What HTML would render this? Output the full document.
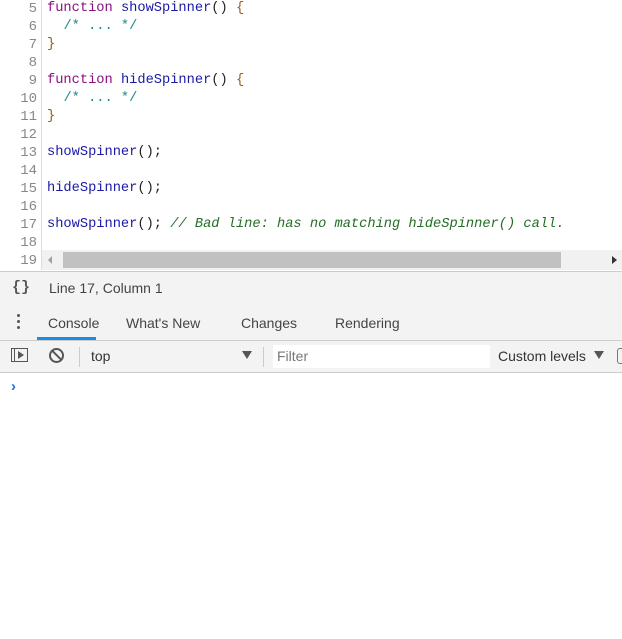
<!DOCTYPE html>
<html><head><style>
body{margin:0;width:622px;height:639px;overflow:hidden;background:#fff;font-family:"Liberation Sans",sans-serif;position:relative}
.code{position:absolute;left:0;top:0;width:622px;height:250px;overflow:hidden}
.ln{position:absolute;left:0;width:37px;text-align:right;color:#888;font:14px/18px "Liberation Mono",monospace}
.gut{position:absolute;left:41px;top:0;width:1px;height:270px;background:#ddd}
.tx{position:absolute;left:47px;font:13.7px/18px "Liberation Mono",monospace;white-space:pre;color:#222}
.k{color:#881280}.f{color:#1a1aa6}.c{color:#236e25}.b{color:#a05a00}.cm{color:#236e25;font-style:italic}
</style></head><body>
<div class="code">
<div class="ln" style="top:0">5<br>6<br>7<br>8<br>9<br>10<br>11<br>12<br>13<br>14<br>15<br>16<br>17<br>18<br>19</div>
<div class="tx" style="top:0"><span class="k">function</span> <span class="f">showSpinner</span>() <span class="b">{</span>
  <span style="color:#1a8a8a">/* ... */</span>
<span class="b">}</span>

<span class="k">function</span> <span class="f">hideSpinner</span>() <span class="b">{</span>
  <span style="color:#1a8a8a">/* ... */</span>
<span class="b">}</span>

<span class="f">showSpinner</span>();

<span class="f">hideSpinner</span>();

<span class="f">showSpinner</span>(); <span class="cm">// Bad line: has no matching hideSpinner() call.</span>
</div>
</div>
<div class="gut"></div>
<div class="ln" style="top:252px;background:#fff">19</div>
<div style="position:absolute;left:42px;top:250px;width:580px;height:20px;background:#f1f1f1"></div>
<div style="position:absolute;left:63px;top:252px;width:498px;height:16px;background:#c1c1c1"></div>
<div style="position:absolute;left:48px;top:256px;width:0;height:0;border-top:4px solid transparent;border-bottom:4px solid transparent;border-right:4px solid #a0a0a0"></div>
<div style="position:absolute;left:612px;top:256px;width:0;height:0;border-top:4px solid transparent;border-bottom:4px solid transparent;border-left:5px solid #333"></div>
<div style="position:absolute;left:0;top:271px;width:622px;height:34px;background:#f3f3f3;border-top:1px solid #ccc;border-bottom:1px solid #ddd"></div>
<div style="position:absolute;left:12px;top:279px;font:bold 15px 'Liberation Mono',monospace;color:#555">{}</div>
<div style="position:absolute;left:49px;top:280px;font-size:14px;color:#444">Line 17, Column 1</div>
<div style="position:absolute;left:0;top:306px;width:622px;height:34px;background:#f3f3f3;border-bottom:1px solid #ccc"></div>
<div style="position:absolute;left:17px;top:314px;width:3px;height:3px;background:#555;border-radius:2px;box-shadow:0 6px #555,0 12px #555"></div>
<div style="position:absolute;left:48px;top:315px;font-size:14px;color:#444">Console</div>
<div style="position:absolute;left:126px;top:315px;font-size:14px;color:#444">What's New</div>
<div style="position:absolute;left:241px;top:315px;font-size:14px;color:#444">Changes</div>
<div style="position:absolute;left:335px;top:315px;font-size:14px;color:#444">Rendering</div>
<div style="position:absolute;left:37px;top:337px;width:59px;height:3px;background:#1a8fe0"></div>
<div style="position:absolute;left:0;top:341px;width:622px;height:31px;background:#f3f3f3;border-bottom:1px solid #ccc"></div>
<div style="position:absolute;left:11px;top:348px;width:17px;height:14px;border:1px solid #555;box-sizing:border-box"></div>
<div style="position:absolute;left:14px;top:349px;width:1px;height:12px;background:#555"></div>
<div style="position:absolute;left:18px;top:351px;border-top:4px solid transparent;border-bottom:4px solid transparent;border-left:6px solid #555"></div>
<div style="position:absolute;left:49px;top:348px;width:11px;height:11px;border:2px solid #555;border-radius:50%"></div>
<div style="position:absolute;left:50px;top:354px;width:13px;height:2px;background:#555;transform:rotate(45deg)"></div>
<div style="position:absolute;left:79px;top:347px;width:1px;height:20px;background:#ccc"></div>
<div style="position:absolute;left:91px;top:348px;font-size:14px;color:#333">top</div>
<div style="position:absolute;left:242px;top:351px;border-left:5px solid transparent;border-right:5px solid transparent;border-top:8px solid #555"></div>
<div style="position:absolute;left:263px;top:347px;width:1px;height:20px;background:#ccc"></div>
<div style="position:absolute;left:273px;top:345px;width:217px;height:23px;background:#fff"></div>
<div style="position:absolute;left:277px;top:348px;font-size:14px;color:#777">Filter</div>
<div style="position:absolute;left:498px;top:348px;font-size:14px;color:#333">Custom levels</div>
<div style="position:absolute;left:594px;top:351px;border-left:5px solid transparent;border-right:5px solid transparent;border-top:8px solid #555"></div>
<div style="position:absolute;left:617px;top:348px;width:10px;height:14px;border:1px solid #777;border-radius:3px"></div>
<div style="position:absolute;left:11px;top:378px;font-size:15px;font-weight:bold;color:#1a73e8">›</div>
</body></html>
